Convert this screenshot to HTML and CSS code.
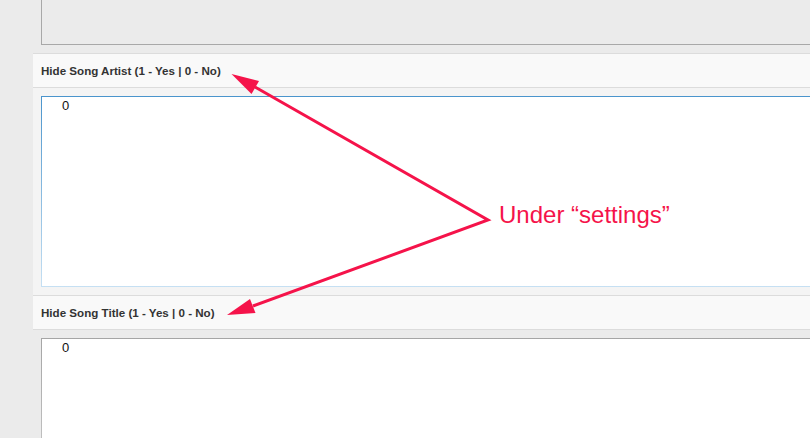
FILE: index.html
```html
<!DOCTYPE html>
<html lang="en">
  <head>
    <meta charset="UTF-8" />
    <meta name="viewport" content="width=device-width, initial-scale=1.0" />
    <title>Settings</title>
    <link rel="stylesheet" href="styles.css">
  </head>
  <body>
    <div class="settings">
      <div class="field-prev">
        <div class="box-prev"></div>
      </div>

      <div class="field field-active">
        <div class="field-head">Hide Song Artist (1 - Yes | 0 - No)</div>
        <div class="field-body">
          <textarea class="value value-active">0</textarea>
        </div>
      </div>

      <div class="field">
        <div class="field-head">Hide Song Title (1 - Yes | 0 - No)</div>
        <div class="field-body">
          <textarea class="value">0</textarea>
        </div>
      </div>
    </div>

    <div class="note">
      <svg class="arrows" width="810" height="438" viewBox="0 0 810 438">
        <polyline points="255,87 488,220 253,306" fill="none" stroke="#f5134a" stroke-width="3" stroke-linejoin="miter" />
        <polygon points="231.5,74 259,81 251.5,94" fill="#f5134a" />
        <polygon points="227,315 250,299 255.5,313" fill="#f5134a" />
      </svg>
      <span class="note-text">Under &ldquo;settings&rdquo;</span>
    </div>
  </body>
</html>
```

FILE: styles.css
```css
body {
  margin: 0;
  background-color: #ebebeb;
  font-family: "Liberation Sans", Arial, sans-serif;
  overflow: hidden;
  height: 438px;
}
.settings {
  margin-left: 33px;
  height: 438px;
  overflow: hidden;
}
.field-prev {
  padding: 0 0 8px 8px;
}
.box-prev {
  height: 44px;
  background-color: #ebebeb;
  border-left: 1px solid #a8a8a8;
  border-bottom: 1px solid #a8a8a8;
}
.field-head {
  height: 33px;
  line-height: 33px;
  padding-left: 8px;
  background-color: #f9f9f9;
  border-top: 1px solid #dcdcdc;
  border-bottom: 1px solid #dcdcdc;
  font-size: 11.6px;
  font-weight: bold;
  color: #333;
}
.field-body {
  padding: 8px 0 8px 8px;
  background-color: #ebebeb;
}
.field-active .field-body {
  background-color: #f4f4f4;
}
.value {
  display: block;
  box-sizing: border-box;
  width: 100%;
  height: 191px;
  margin: 0;
  padding: 1px 20px;
  resize: none;
  outline: none;
  background-color: #fff;
  border: 1px solid;
  border-right-width: 0;
  border-image: linear-gradient(#a5a5a5, #d6d6d6) 1;
  font-family: "Liberation Sans", Arial, sans-serif;
  font-size: 13px;
  color: #111;
}
.value-active {
  border-image: linear-gradient(#4a94cc, #c6e0f3) 1;
}
.note {
  position: absolute;
  left: 0;
  top: 0;
  width: 810px;
  height: 438px;
  pointer-events: none;
}
.arrows {
  position: absolute;
  left: 0;
  top: 0;
}
.note-text {
  position: absolute;
  left: 499px;
  top: 201px;
  font-size: 24px;
  color: #f5134a;
  white-space: nowrap;
}
```
